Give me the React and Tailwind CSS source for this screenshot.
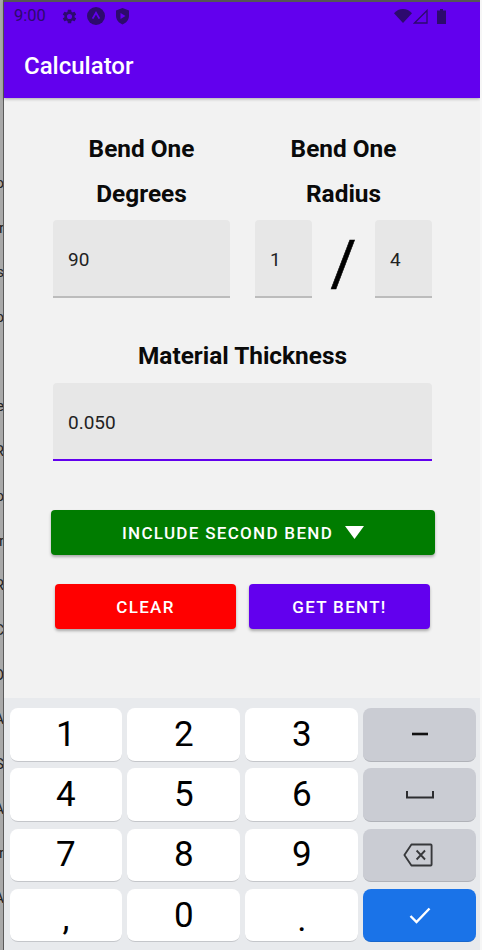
import React from "react";

const roboto = "font-['Roboto',sans-serif]";
const edgeLetters = ["o", "r", "s", "o", "", "e", "R", "o", "r", "R", "C", "O", "A", "S", "A", "r", "A"];

function Field({ value, className, active }) {
  return (
    <div
      className={`h-[78px] flex items-center pl-[15px] pt-[5px] bg-[#e7e7e7] rounded-t-[4px] border-b-2 text-[19px] text-[#222] ${
        active ? "border-[#6200ee]" : "border-[#bcbcbc]"
      } ${className}`}
    >
      {value}
    </div>
  );
}

function Heading({ children }) {
  return <div className="h-[45px] leading-[45px] text-center text-[24.4px] font-bold text-[#0a0a0a] whitespace-nowrap">{children}</div>;
}

function Key({ children, kind = "white", labelClass = "" }) {
  const tone =
    kind === "white"
      ? "bg-white text-black border-[#c4c6ca]"
      : kind === "grey"
      ? "bg-[#caccd3] text-[#2c2d30] border-[#b0b2b8]"
      : "bg-[#1a73e8] text-white border-[#1866cc]";
  return (
    <div className={`h-[53.5px] rounded-[8px] border-b flex items-center justify-center text-[35px] leading-none ${tone} ${labelClass}`}>
      {children}
    </div>
  );
}

const btn =
  "h-[45px] rounded-[4px] text-white shadow-[0_2px_3px_rgba(0,0,0,0.3)] flex items-center justify-center pt-[2px] text-[17px] font-medium tracking-[1.3px]";

export default function App() {
  return (
    <div className={`w-[482px] h-[950px] flex overflow-hidden bg-[#f2f2f2] ${roboto}`}>
      <div className="w-[4px] h-full shrink-0 bg-[#a9a9a9] border-r border-[#5a5a5a] overflow-hidden flex flex-col items-end pt-[172px] text-[15px] text-[#222]">
        {edgeLetters.map((l, i) => (
          <div key={i} className="h-[44.7px] leading-[22px] -mr-[1px] whitespace-nowrap">
            {l}
          </div>
        ))}
      </div>

      <div className="flex-1 flex flex-col min-w-0">
        <div className="h-[98px] shrink-0 bg-[#6200ee] border-t-2 border-[#555] flex flex-col shadow-[0_1px_3px_rgba(0,0,0,0.3)]">
          <div className="h-[28px] flex items-center text-[#2d0a6e]">
            <span className="ml-[10px] text-[16.5px] w-[34px]">9:00</span>
            <svg className="ml-[13px]" width="17" height="17" viewBox="0 0 24 24" fill="currentColor">
              <path d="M19.14 12.94c.04-.3.06-.61.06-.94s-.02-.64-.07-.94l2.03-1.58a.49.49 0 0 0 .12-.61l-1.92-3.32a.49.49 0 0 0-.59-.22l-2.39.96a7 7 0 0 0-1.62-.94l-.36-2.54a.48.48 0 0 0-.48-.41h-3.84a.48.48 0 0 0-.47.41l-.36 2.54c-.59.24-1.13.57-1.62.94l-2.39-.96a.49.49 0 0 0-.59.22L2.74 8.87a.48.48 0 0 0 .12.61l2.03 1.58c-.05.3-.09.63-.09.94s.02.64.07.94l-2.03 1.58a.49.49 0 0 0-.12.61l1.92 3.32c.12.22.37.29.59.22l2.39-.96c.5.38 1.03.7 1.62.94l.36 2.54c.05.24.24.41.48.41h3.84c.24 0 .44-.17.47-.41l.36-2.54c.59-.24 1.13-.56 1.62-.94l2.39.96c.22.08.47 0 .59-.22l1.92-3.32a.48.48 0 0 0-.12-.61l-2.01-1.58zM12 15.6a3.6 3.6 0 1 1 0-7.2 3.6 3.6 0 0 1 0 7.2z" />
            </svg>
            <svg className="ml-[9px]" width="18" height="18" viewBox="0 0 18 18">
              <circle cx="9" cy="9" r="9" fill="currentColor" />
              <path d="M5.6 11.6 9 5.8l3.4 5.8" fill="none" stroke="#6200ee" strokeWidth="1.8" />
            </svg>
            <svg className="ml-[10px]" width="15" height="17" viewBox="0 0 15 17">
              <path d="M7.5 0 14 2.4v5.4c0 4-2.8 7.4-6.5 8.6C3.8 15.2 1 11.8 1 7.8V2.4z" fill="currentColor" />
              <path d="M5.5 5v6l5-3z" fill="#6200ee" />
            </svg>
            <svg className="ml-auto" width="18" height="14" viewBox="0 0 18 14">
              <path d="M0 4.2C2.4 1.6 5.5 0 9 0s6.6 1.6 9 4.2L9 14z" fill="currentColor" />
            </svg>
            <svg className="ml-[1px]" width="15" height="15" viewBox="0 0 15 15">
              <path d="M14 1.5V14H1.5z" fill="none" stroke="currentColor" strokeWidth="1.3" />
            </svg>
            <svg className="ml-[9px] mr-[34px]" width="9" height="15" viewBox="0 0 9 15">
              <path d="M3 0h3v1.5h3V15H0V1.5h3z" fill="currentColor" />
            </svg>
          </div>
          <div className="pl-[20px] pt-[2px] text-[24px] font-medium leading-[68px] h-[68px] text-white">Calculator</div>
        </div>

        <div className="flex-1 flex flex-col pl-[49px] pt-[28px]">
          <div className="flex w-[379px] gap-[25px]">
            <div className="w-[177px]">
              <Heading>Bend One</Heading>
              <Heading>Degrees</Heading>
              <Field value="90" className="mt-[4px]" />
            </div>
            <div className="w-[177px]">
              <Heading>Bend One</Heading>
              <Heading>Radius</Heading>
              <div className="mt-[4px] flex items-center">
                <Field value="1" className="w-[57px]" />
                <div className="w-[63px] text-center text-[63px] leading-none text-black pt-[8px] [-webkit-text-stroke:0.6px_black]">/</div>
                <Field value="4" className="w-[57px]" />
              </div>
            </div>
          </div>

          <div className="w-[379px] mt-[38px]">
            <div className="h-[47px] leading-[39px] text-center text-[24.4px] font-bold text-[#0a0a0a]">Material Thickness</div>
            <Field value="0.050" active />
          </div>

          <div className={`mt-[49px] -ml-[2px] w-[384px] bg-[#007c00] ${btn}`}>
            <span>INCLUDE SECOND BEND</span>
            <svg className="ml-[12px] -mt-[2px]" width="19" height="13" viewBox="0 0 19 13">
              <path d="M0 0h19l-9.5 13z" fill="white" />
            </svg>
          </div>

          <div className="mt-[29px] ml-[2px] flex gap-[13px]">
            <div className={`w-[181px] bg-[#ff0000] ${btn}`}>CLEAR</div>
            <div className={`w-[181px] bg-[#6200ee] ${btn}`}>GET BENT!</div>
          </div>
        </div>

        <div className="h-[252px] shrink-0 bg-[#e8eaed] pt-[10px] pl-[5.5px] grid grid-cols-[repeat(4,112.7px)] gap-x-[5.3px] gap-y-[6.83px] content-start">
          <Key>1</Key>
          <Key>2</Key>
          <Key>3</Key>
          <Key kind="grey">
            <svg width="16" height="4" viewBox="0 0 16 4">
              <rect width="16" height="2.6" y="0.7" fill="#111" />
            </svg>
          </Key>
          <Key>4</Key>
          <Key>5</Key>
          <Key>6</Key>
          <Key kind="grey">
            <svg width="28" height="8" viewBox="0 0 28 8">
              <path d="M1 0v6.5h26V0" fill="none" stroke="#2c2d30" strokeWidth="2" />
            </svg>
          </Key>
          <Key>7</Key>
          <Key>8</Key>
          <Key>9</Key>
          <Key kind="grey">
            <svg className="-ml-[3px]" width="30" height="24" viewBox="0 0 32 24" fill="none" stroke="#37383b" strokeWidth="2" preserveAspectRatio="none">
              <path d="M9 1.5h20.5a1 1 0 0 1 1 1v19a1 1 0 0 1-1 1H9L1.5 12z" strokeLinejoin="round" />
              <path d="M14.5 7.5l9 9m0-9l-9 9" />
            </svg>
          </Key>
          <Key labelClass="pt-[6px]">,</Key>
          <Key>0</Key>
          <Key labelClass="pt-[8px]">.</Key>
          <Key kind="blue">
            <svg width="22" height="17" viewBox="0 0 22 17" fill="none" stroke="white" strokeWidth="2.4">
              <path d="M1.5 9l6 6L20.5 1.5" />
            </svg>
          </Key>
        </div>
      </div>
      <div className="w-[2px] h-full shrink-0 bg-[#f6f6f6]" />
    </div>
  );
}
